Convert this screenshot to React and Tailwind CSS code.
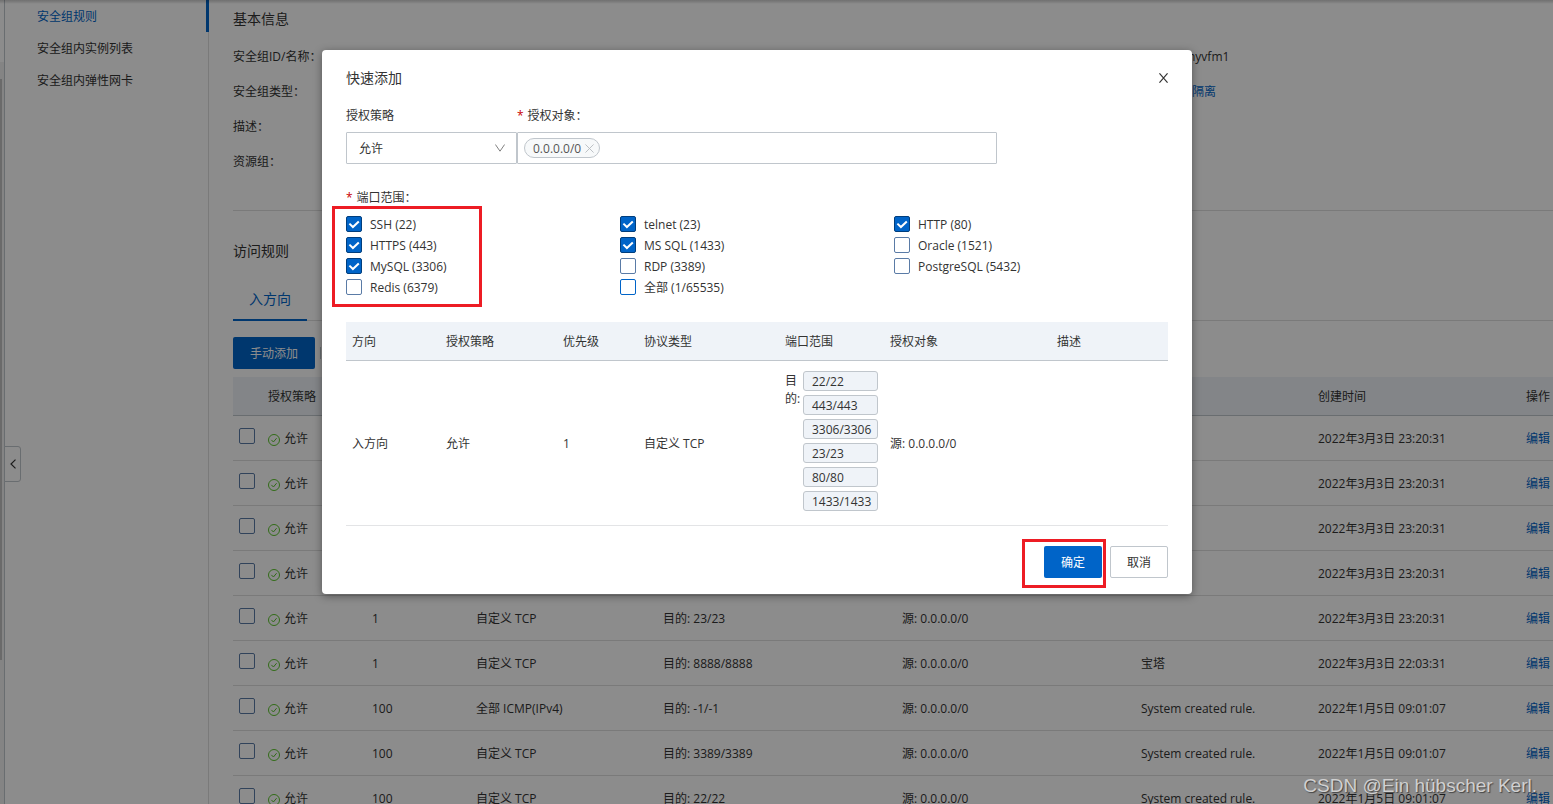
const rules = [
  ["", "", "", "", "", "2022年3月3日 23:20:31"],
  ["", "", "", "", "", "2022年3月3日 23:20:31"],
  ["", "", "", "", "", "2022年3月3日 23:20:31"],
  ["", "", "", "", "", "2022年3月3日 23:20:31"],
  ["1", "自定义 TCP", "目的: 23/23", "源: 0.0.0.0/0", "", "2022年3月3日 23:20:31"],
  ["1", "自定义 TCP", "目的: 8888/8888", "源: 0.0.0.0/0", "宝塔", "2022年3月3日 22:03:31"],
  ["100", "全部 ICMP(IPv4)", "目的: -1/-1", "源: 0.0.0.0/0", "System created rule.", "2022年1月5日 09:01:07"],
  ["100", "自定义 TCP", "目的: 3389/3389", "源: 0.0.0.0/0", "System created rule.", "2022年1月5日 09:01:07"],
  ["100", "自定义 TCP", "目的: 22/22", "源: 0.0.0.0/0", "System created rule.", "2022年1月5日 09:01:07"],
];

const ports = [
  ["SSH (22)", true],
  ["telnet (23)", true],
  ["HTTP (80)", true],
  ["HTTPS (443)", true],
  ["MS SQL (1433)", true],
  ["Oracle (1521)", false],
  ["MySQL (3306)", true],
  ["RDP (3389)", false],
  ["PostgreSQL (5432)", false],
  ["Redis (6379)", false],
  ["全部 (1/65535)", false, true],
];

const targets = ["22/22", "443/443", "3306/3306", "23/23", "80/80", "1433/1433"];

function PortOption({ label, checked, focused }) {
  return (
    <label className="flex h-[21px] items-center gap-2">
      <span className="grid size-4">
        <input
          type="checkbox"
          defaultChecked={checked}
          className={
            "peer col-start-1 row-start-1 size-4 appearance-none rounded-[2px] border bg-white checked:border-[#003e7d] checked:bg-[#0064c8] " +
            (focused ? "border-[#0064c8]" : "border-[#5a7ba6]")
          }
        />
        <svg
          viewBox="0 0 16 16"
          className="pointer-events-none col-start-1 row-start-1 hidden size-4 peer-checked:block"
          fill="none"
          stroke="#fff"
          strokeWidth="2"
        >
          <path d="M3.4 7.6 6.9 11 12.8 5.4" />
        </svg>
      </span>
      <span className="pt-0.5">{label}</span>
    </label>
  );
}

function AllowIcon() {
  return (
    <svg viewBox="0 0 12 12" className="mt-0.5 size-3" fill="none" stroke="#5cc42c" aria-hidden="true">
      <circle cx="6" cy="6" r="5.5" />
      <path d="M3.4 5.9 5.4 8 8.6 4.2" />
    </svg>
  );
}

function Sidebar() {
  return (
    <nav className="w-[204px] shrink-0 border-r border-[#dedede]">
      <ul>
        <li className="-mr-px h-8 border-r-[3px] border-[#0064c8]">
          <a href="#rules" className="block pt-px pl-8 leading-8 text-[#0064c8]">安全组规则</a>
        </li>
        <li className="h-8">
          <a href="#instances" className="block pt-px pl-8 leading-8">安全组内实例列表</a>
        </li>
        <li className="h-8">
          <a href="#eni" className="block pt-px pl-8 leading-8">安全组内弹性网卡</a>
        </li>
      </ul>
    </nav>
  );
}

function RuleTable() {
  return (
    <table className="w-[1340px] table-fixed border-collapse text-left">
      <colgroup>
        <col className="w-[35px]" />
        <col className="w-[104px]" />
        <col className="w-[104px]" />
        <col className="w-[187px]" />
        <col className="w-[239px]" />
        <col className="w-[239px]" />
        <col className="w-[177px]" />
        <col className="w-[208px]" />
        <col />
      </colgroup>
      <thead>
        <tr className="h-[38px] border-b border-[#c0c6cc] bg-[#eff3f8]">
          <th />
          {["授权策略", "优先级", "协议类型", "端口范围", "授权对象", "描述", "创建时间", "操作"].map((h) => (
            <th key={h} className="pt-[3px] font-normal">{h}</th>
          ))}
        </tr>
      </thead>
      <tbody>
        {rules.map(([priority, protocol, port, source, desc, time], i) => (
          <tr key={i} className="h-[45px] border-b border-[#dedede]">
            <td className="pb-1 pl-[6px]">
              <input
                type="checkbox"
                aria-label={"选择规则 " + (i + 1)}
                className="block size-4 appearance-none rounded-[2px] border border-[#5a7ba6]"
              />
            </td>
            <td className="pt-0.5">
              <span className="flex items-center gap-1"><AllowIcon />允许</span>
            </td>
            <td className="pt-0.5">{priority}</td>
            <td className="pt-0.5">{protocol}</td>
            <td className="pt-0.5">{port}</td>
            <td className="pt-0.5">{source}</td>
            <td className="pt-0.5">{desc}</td>
            <td className="pt-0.5">{time}</td>
            <td className="pt-0.5"><a href="#edit" className="text-[#0064c8]">编辑</a></td>
          </tr>
        ))}
      </tbody>
    </table>
  );
}

function Page() {
  return (
    <div className="flex h-full">
      <div className="w-[5px] shrink-0 border-r border-[#c0c6cc] pt-[62px]">
        <div className="h-full bg-[#f1f1f1] pt-[17px]">
          <div className="h-[581px] w-[2px] bg-[#c1c1c1]" />
        </div>
      </div>
      <Sidebar />
      <main className="min-w-0 flex-1 overflow-hidden pl-6">
        <h2 className="mt-2 text-sm leading-[22px]">基本信息</h2>
        <dl className="mt-[9px] grid grid-cols-[1fr_365px] leading-[35px]">
          <dt>安全组ID/名称：</dt>
          <dd>nyvfm1</dd>
          <dt>安全组类型：</dt>
          <dd><a href="#isolation" className="pl-1 text-[#0064c8]">隔离</a></dd>
          <dt className="col-span-2">描述：</dt>
          <dt className="col-span-2">资源组：</dt>
        </dl>
        <h2 className="mt-[31px] border-t border-[#dedede] pt-[29px] text-sm leading-[22px]">访问规则</h2>
        <div role="tablist" className="mt-[17px] flex border-b border-[#dedede] text-sm">
          <button role="tab" aria-selected="true" className="-mb-px h-[42px] border-b-2 border-[#0064c8] px-4 text-[#0064c8]">
            入方向
          </button>
        </div>
        <div className="mt-4 mb-2 flex items-center gap-[5px]">
          <button className="h-8 rounded-[2px] bg-[#0064c8] px-[17px] pt-0.5 text-white">手动添加</button>
          <span className="h-3 w-px bg-[#c0c6cc]" />
        </div>
        <RuleTable />
      </main>
    </div>
  );
}

function QuickAddDialog() {
  return (
    <div role="dialog" aria-label="快速添加" className="relative w-[870px] rounded bg-white px-6 pb-4 shadow-[0_2px_8px_rgba(0,0,0,0.4)]">
      <header className="flex h-14 items-center justify-between">
        <h1 className="text-sm">快速添加</h1>
        <button aria-label="关闭" className="py-1 pl-1">
          <svg viewBox="0 0 10 10" className="h-[10px] w-[9px]" fill="none" stroke="#333" strokeWidth="1.2" preserveAspectRatio="none">
            <path d="M.5.3 9.5 9.7M9.5.3.5 9.7" />
          </svg>
        </button>
      </header>
      <div className="grid grid-cols-[171px_480px] gap-y-[6px]">
        <label htmlFor="policy" className="leading-5">授权策略</label>
        <label htmlFor="target" className="leading-5"><span className="mr-1 text-[#c80000]">*</span>授权对象：</label>
        <div className="grid">
          <select id="policy" className="col-start-1 row-start-1 h-8 w-full appearance-none rounded-[1px] border border-[#c0c6cc] px-3 pt-0.5">
            <option>允许</option>
          </select>
          <svg viewBox="0 0 10 8" className="pointer-events-none col-start-1 row-start-1 mr-3 h-2 w-[10px] self-center justify-self-end" fill="none" stroke="#808080">
            <path d="M.4.5 5 7.2 9.6.5" />
          </svg>
        </div>
        <div className="flex h-8 items-center rounded-[1px] border border-[#c0c6cc] pl-[6px]">
          <span className="flex h-5 shrink-0 items-center gap-1 rounded-full border border-[#c0c6cc] bg-[#f7f9fa] pr-[5px] pl-2 text-[#555]">
            <span className="pt-px">0.0.0.0/0</span>
            <button aria-label="移除 0.0.0.0/0">
              <svg viewBox="0 0 10 10" className="size-[9px]" fill="none" stroke="#b5bac0">
                <path d="M.5.5 9.5 9.5M9.5.5.5 9.5" />
              </svg>
            </button>
          </span>
          <input id="target" className="min-w-0 flex-1 outline-none" />
        </div>
      </div>
      <fieldset className="mt-6">
        <legend className="leading-5"><span className="mr-1 text-[#c80000]">*</span>端口范围：</legend>
        <div className="mt-[5px] grid grid-cols-3">
          {ports.map(([label, checked, focused]) => (
            <PortOption key={label} label={label} checked={checked} focused={focused} />
          ))}
        </div>
      </fieldset>
      <table className="mt-[25px] w-full table-fixed border-collapse text-left">
        <colgroup>
          <col className="w-[100px]" />
          <col className="w-[117px]" />
          <col className="w-[81px]" />
          <col className="w-[141px]" />
          <col className="w-[105px]" />
          <col className="w-[167px]" />
          <col />
        </colgroup>
        <thead>
          <tr className="h-[38px] border-b border-[#c0c6cc] bg-[#eff3f8]">
            {["方向", "授权策略", "优先级", "协议类型", "端口范围", "授权对象", "描述"].map((h) => (
              <th key={h} className="pt-[3px] font-normal first:pl-[6px]">{h}</th>
            ))}
          </tr>
        </thead>
        <tbody>
          <tr className="border-b border-[#e3e4e6]">
            <td className="pt-0.5 pl-[6px]">入方向</td>
            <td className="pt-0.5">允许</td>
            <td className="pt-0.5">1</td>
            <td className="pt-0.5">自定义 TCP</td>
            <td className="pt-[10px] pb-[14px]">
              <div className="flex gap-[2px]">
                <span className="w-4 pt-px leading-[18px]">目的:</span>
                <ul className="grid w-[75px] gap-1">
                  {targets.map((t) => (
                    <li key={t} className="h-5 rounded-[3px] border border-[#c0c6cc] bg-[#eff3f8] pl-2 leading-5 whitespace-nowrap">{t}</li>
                  ))}
                </ul>
              </div>
            </td>
            <td className="pt-0.5">源: 0.0.0.0/0</td>
            <td />
          </tr>
        </tbody>
      </table>
      <footer className="mt-5 flex justify-end gap-2">
        <button className="h-8 rounded-[2px] bg-[#0064c8] px-[17px] pt-0.5 text-white">确定</button>
        <button className="h-8 rounded-[2px] border border-[#c0c6cc] bg-white px-4 pt-0.5">取消</button>
      </footer>
      <div className="pointer-events-none absolute top-[156px] left-[10px] h-[101px] w-[150px] border-3 border-[#ed1c24]" />
      <div className="pointer-events-none absolute right-[86px] bottom-[6px] h-[49px] w-[84px] border-3 border-[#ed1c24]" />
    </div>
  );
}

export default function App() {
  return (
    <div className="relative h-screen overflow-hidden bg-white font-['Open_Sans','Noto_Sans_CJK_SC',sans-serif] text-xs text-[#333]">
      <Page />
      <button aria-label="收起菜单" className="absolute top-[446px] left-1 flex h-9 w-[17px] items-center justify-center rounded-r-[3px] border border-[#c0c6cc] bg-white">
        <svg viewBox="0 0 6 10" className="h-[10px] w-[6px]" fill="none" stroke="#333" strokeWidth="1.2">
          <path d="M5.5.6 1 5 5.5 9.4" />
        </svg>
      </button>
      <div className="absolute inset-x-0 top-0 h-1 bg-linear-to-b from-black/20 to-transparent" />
      <div className="absolute inset-0 flex items-start justify-center bg-black/45 pt-[50px] pr-[39px]">
        <QuickAddDialog />
      </div>
      <div className="absolute right-4 bottom-1 text-[19px] leading-7 text-[#d0d0d0] [font-family:'Liberation_Sans',sans-serif] [text-shadow:1px_1px_1px_#444]">
        CSDN @Ein hübscher Kerl.
      </div>
    </div>
  );
}
